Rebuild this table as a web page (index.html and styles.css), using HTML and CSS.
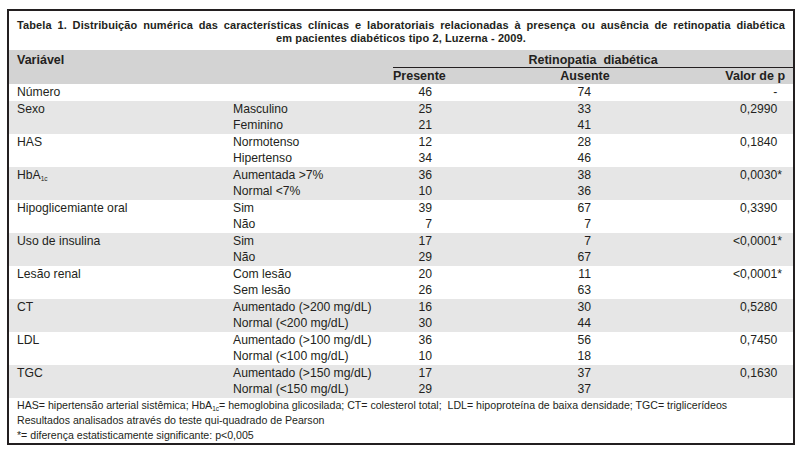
FILE: index.html
```html
<!DOCTYPE html>
<html lang="pt">
<head>
<meta charset="utf-8">
<title>Tabela 1</title>
<link rel="stylesheet" href="styles.css">
</head>
<body>
<div class="frame">
  <div class="title">
    <p class="t1">Tabela 1. Distribuição numérica das características clínicas e laboratoriais relacionadas à presença ou ausência de retinopatia diabética</p>
    <p class="t2">em pacientes diabéticos tipo 2, Luzerna - 2009.</p>
  </div>
  <table class="data">
    <colgroup>
      <col class="c1"><col class="c2"><col class="c3"><col class="c4"><col class="c5">
    </colgroup>
    <thead>
      <tr class="h1">
        <th class="var" colspan="2">Variável</th>
        <th class="group" colspan="3">Retinopatia&nbsp; diabética</th>
      </tr>
      <tr class="h2">
        <th></th><th></th>
        <th class="pres">Presente</th>
        <th class="aus">Ausente</th>
        <th class="pv">Valor de p</th>
      </tr>
    </thead>
    <tbody>
      <tr><td>Número</td><td></td><td class="n1">46</td><td class="n2">74</td><td class="p">-<span class="sp">*</span></td></tr>
      <tr class="shade"><td>Sexo</td><td>Masculino</td><td class="n1">25</td><td class="n2">33</td><td class="p">0,2990<span class="sp">*</span></td></tr>
      <tr class="shade"><td></td><td>Feminino</td><td class="n1">21</td><td class="n2">41</td><td class="p"></td></tr>
      <tr><td>HAS</td><td>Normotenso</td><td class="n1">12</td><td class="n2">28</td><td class="p">0,1840<span class="sp">*</span></td></tr>
      <tr><td></td><td>Hipertenso</td><td class="n1">34</td><td class="n2">46</td><td class="p"></td></tr>
      <tr class="shade"><td>HbA<sub>1c</sub></td><td>Aumentada &gt;7%</td><td class="n1">36</td><td class="n2">38</td><td class="p">0,0030*</td></tr>
      <tr class="shade"><td></td><td>Normal &lt;7%</td><td class="n1">10</td><td class="n2">36</td><td class="p"></td></tr>
      <tr><td>Hipoglicemiante oral</td><td>Sim</td><td class="n1">39</td><td class="n2">67</td><td class="p">0,3390<span class="sp">*</span></td></tr>
      <tr><td></td><td>Não</td><td class="n1">7</td><td class="n2">7</td><td class="p"></td></tr>
      <tr class="shade"><td>Uso de insulina</td><td>Sim</td><td class="n1">17</td><td class="n2">7</td><td class="p">&lt;0,0001*</td></tr>
      <tr class="shade"><td></td><td>Não</td><td class="n1">29</td><td class="n2">67</td><td class="p"></td></tr>
      <tr><td>Lesão renal</td><td>Com lesão</td><td class="n1">20</td><td class="n2">11</td><td class="p">&lt;0,0001*</td></tr>
      <tr><td></td><td>Sem lesão</td><td class="n1">26</td><td class="n2">63</td><td class="p"></td></tr>
      <tr class="shade"><td>CT</td><td>Aumentado (&gt;200 mg/dL)</td><td class="n1">16</td><td class="n2">30</td><td class="p">0,5280<span class="sp">*</span></td></tr>
      <tr class="shade"><td></td><td>Normal (&lt;200 mg/dL)</td><td class="n1">30</td><td class="n2">44</td><td class="p"></td></tr>
      <tr><td>LDL</td><td>Aumentado (&gt;100 mg/dL)</td><td class="n1">36</td><td class="n2">56</td><td class="p">0,7450<span class="sp">*</span></td></tr>
      <tr><td></td><td>Normal (&lt;100 mg/dL)</td><td class="n1">10</td><td class="n2">18</td><td class="p"></td></tr>
      <tr class="shade"><td>TGC</td><td>Aumentado (&gt;150 mg/dL)</td><td class="n1">17</td><td class="n2">37</td><td class="p">0,1630<span class="sp">*</span></td></tr>
      <tr class="shade"><td></td><td>Normal (&lt;150 mg/dL)</td><td class="n1">29</td><td class="n2">37</td><td class="p"></td></tr>
    </tbody>
  </table>
  <div class="notes">
    <p>HAS= hipertensão arterial sistêmica; HbA<sub>1c</sub>= hemoglobina glicosilada; CT= colesterol total;&nbsp; LDL= hipoproteína de baixa densidade; TGC= triglicerídeos</p>
    <p>Resultados analisados através do teste qui-quadrado de Pearson</p>
    <p>*= diferença estatisticamente significante: p&lt;0,005</p>
  </div>
</div>
</body>
</html>
```

FILE: styles.css
```css
html, body {
  margin: 0;
  padding: 0;
  background: #ffffff;
}

body {
  font-family: "Liberation Sans", Arial, sans-serif;
  color: #231f20;
}

.frame {
  margin: 9px 0 0 7px;
  width: 788px;
  box-sizing: border-box;
  border: 2px solid #231f20;
}

.title {
  padding: 8px 8px 0 8px;
  height: 25px;
  margin-bottom: 6px;
  font-size: 11px;
  font-weight: bold;
  line-height: 12.5px;
  letter-spacing: 0.1px;
}

.title p {
  margin: 0;
  white-space: nowrap;
}

.t1 {
  text-align: justify;
  text-align-last: justify;
  white-space: normal !important;
}

.t2 {
  text-align: center;
}

.data {
  width: 784px;
  border-collapse: collapse;
  table-layout: fixed;
  font-size: 12.2px;
}

.c1 { width: 216px; }
.c2 { width: 168px; }
.c3 { width: 57px; }
.c4 { width: 270px; }
.c5 { width: 73px; }

.data th, .data td {
  padding: 0;
  height: 16.5px;
  line-height: 16px;
  white-space: nowrap;
  vertical-align: middle;
}

.data thead tr {
  background: #d3d3d3;
}

.data th {
  font-weight: bold;
  font-size: 12.5px;
}

.h1 th {
  vertical-align: bottom;
  line-height: 14px;
}

.var {
  text-align: left;
  padding-left: 8px !important;
}

.group {
  text-align: center;
  border-bottom: 1px solid #231f20;
}

.pres { text-align: left; }
.aus { text-align: center; }
.pv { text-align: right; padding-right: 8px !important; }

.data td:first-child { padding-left: 8px; }
.data td:nth-child(2) { padding-left: 8px; }

.n1 { text-align: right; padding-right: 18px !important; }
.n2 { text-align: right; padding-right: 129px !important; }
.p { text-align: right; padding-right: 11px !important; }

.sp { visibility: hidden; }

.shade { background: #e6e6e6; }

sub {
  font-size: 6.5px;
  line-height: 0;
  vertical-align: -2px;
}

.notes {
  padding: 0 8px;
  font-size: 10.6px;
  line-height: 15px;
}

.notes p {
  margin: 0;
}
```
